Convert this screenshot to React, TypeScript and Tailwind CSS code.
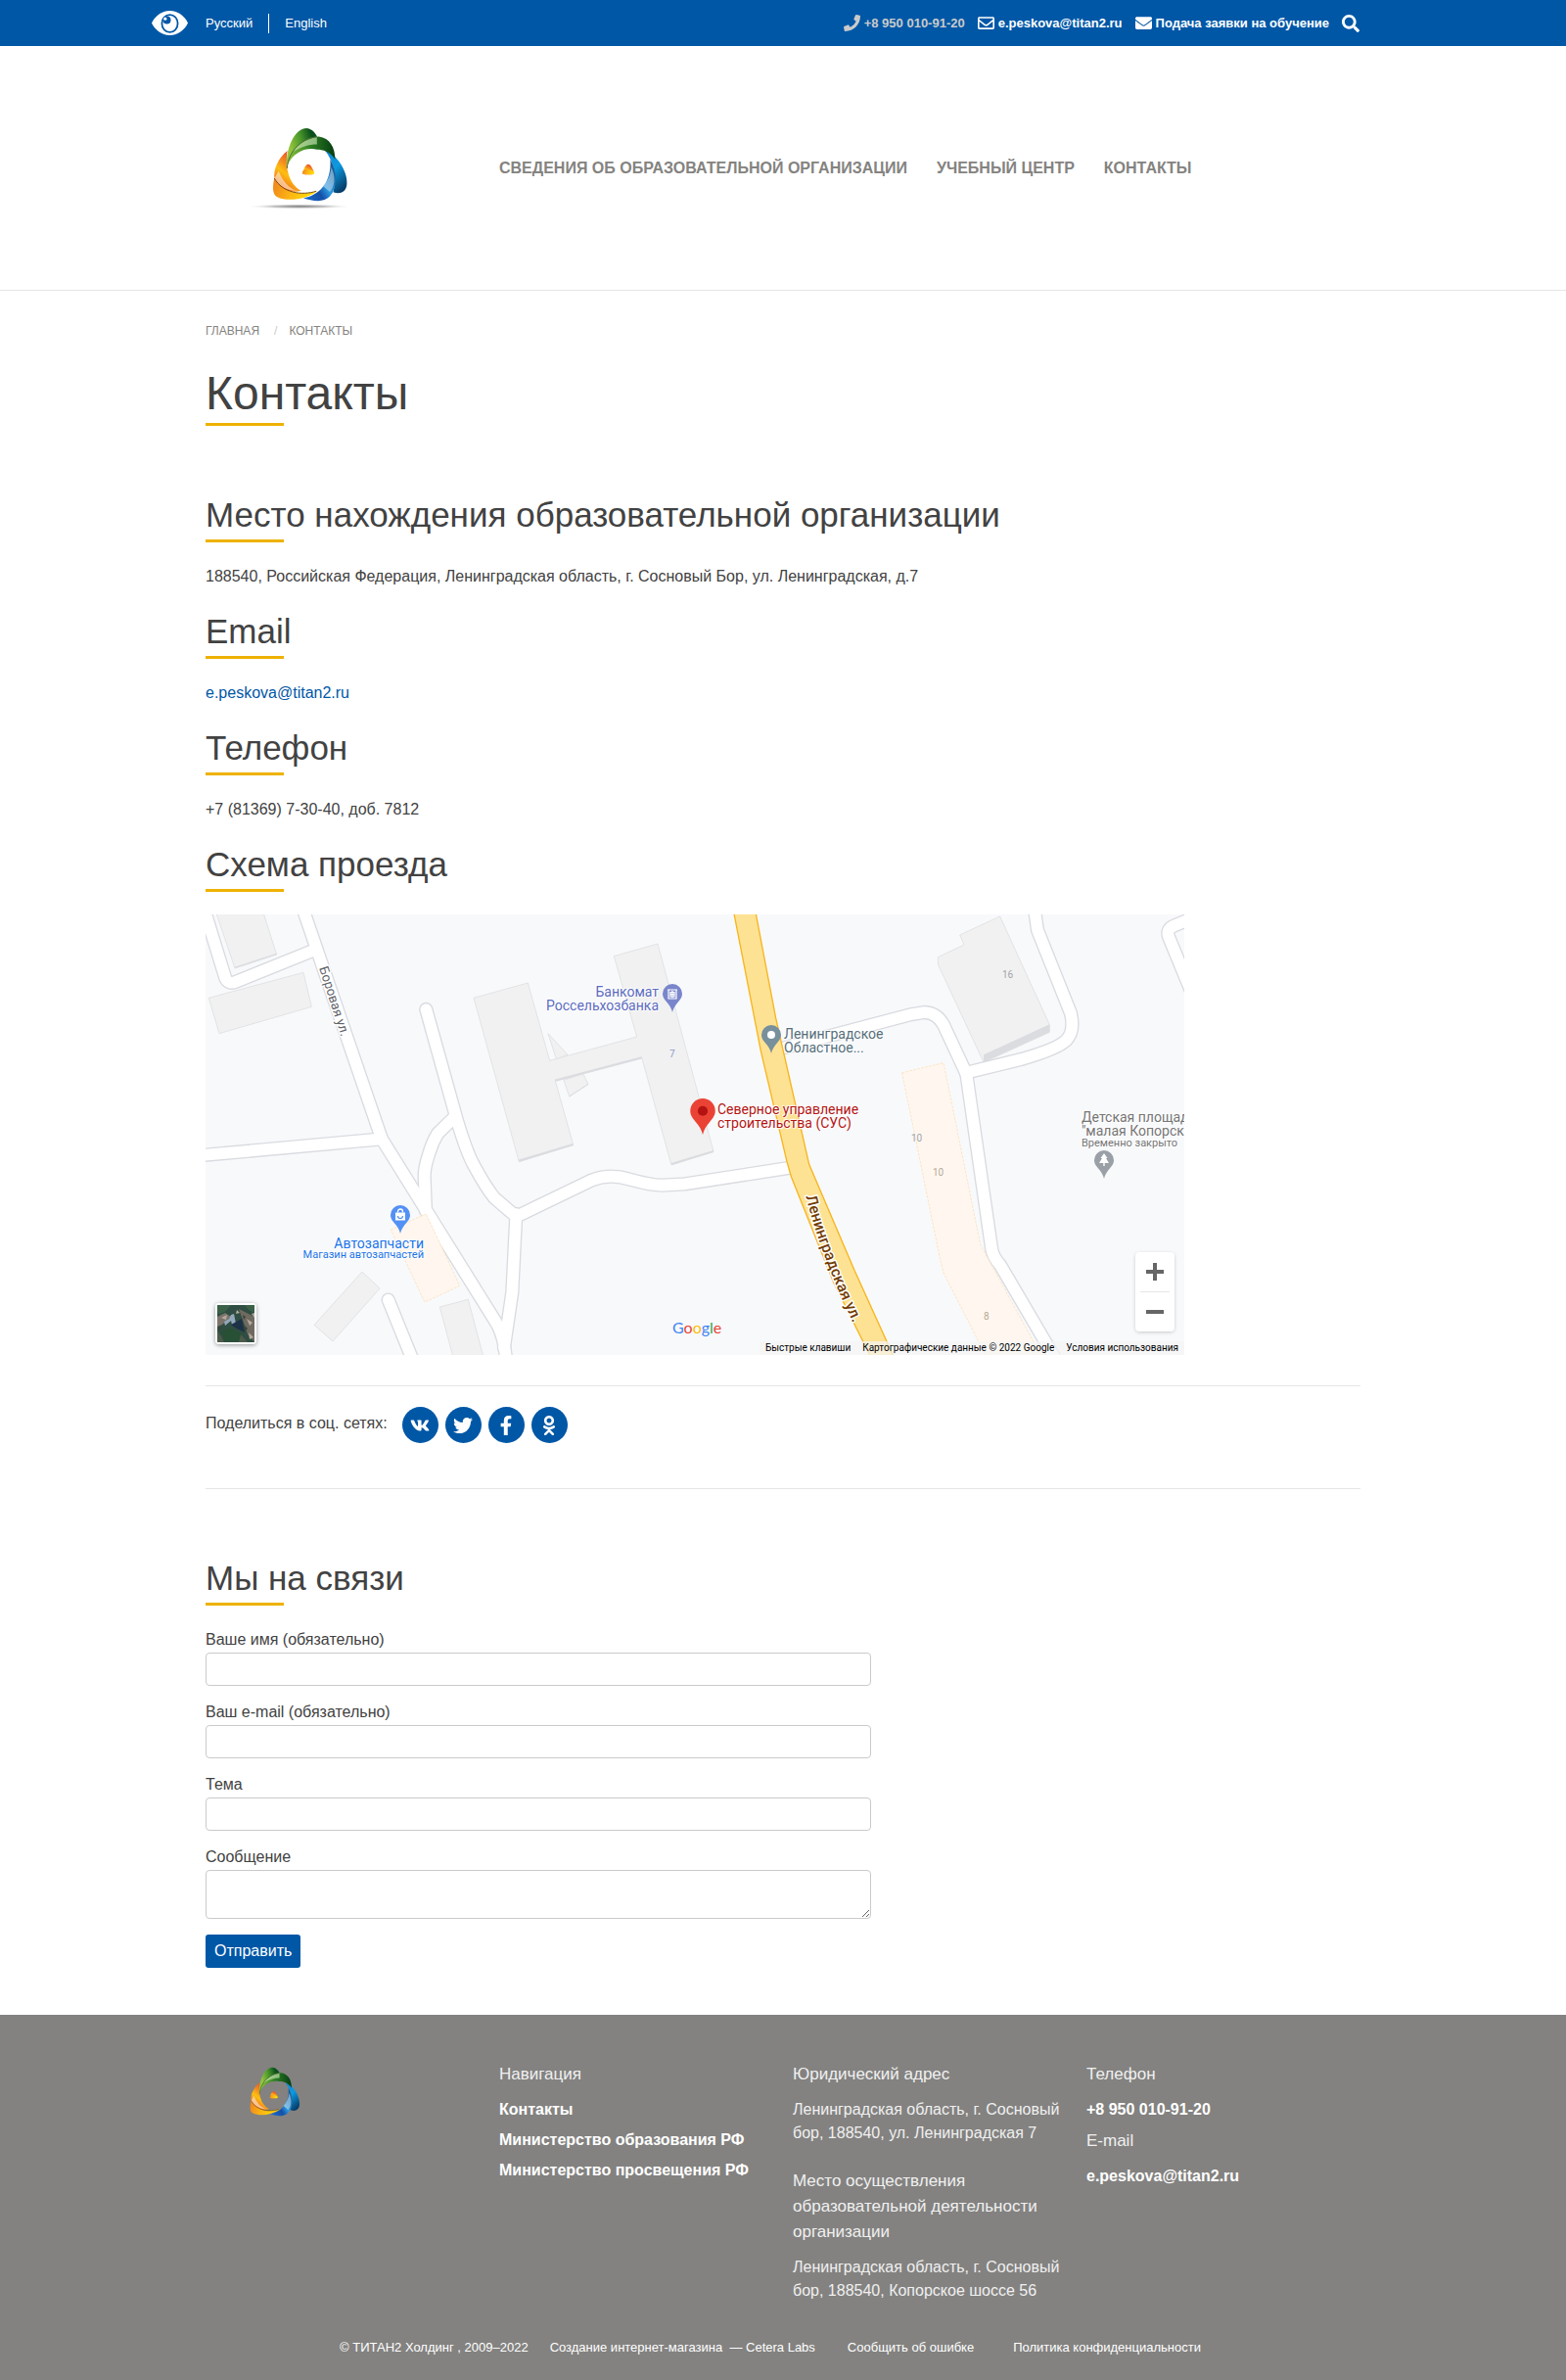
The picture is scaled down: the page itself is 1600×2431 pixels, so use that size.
import type { ReactNode } from "react";
import { FaEnvelope, FaFacebookF, FaOdnoklassniki, FaPhone, FaRegEnvelope, FaSearch, FaTwitter, FaVk } from "react-icons/fa";

const Logo = ({ id, className, shadow }: { id: string; className: string; shadow?: boolean }) => (
  <svg viewBox="0 60 340 252" className={className} role="img" aria-label="ТИТАН2">
    <defs>
      <linearGradient id={`${id}-g1`} x1="0" y1="0.6" x2="1" y2="0.2">
        <stop offset="0.15" stopColor="#93c43c" />
        <stop offset="0.5" stopColor="#4d9a2c" />
        <stop offset="0.85" stopColor="#0a4f1c" />
      </linearGradient>
      <linearGradient id={`${id}-g2`} x1="0" y1="0.5" x2="1" y2="0.5">
        <stop offset="0" stopColor="#8cc63f" />
        <stop offset="0.5" stopColor="#2c7d22" />
        <stop offset="1" stopColor="#053c12" />
      </linearGradient>
      <linearGradient id={`${id}-b1`} x1="0.2" y1="0" x2="0.7" y2="1">
        <stop offset="0" stopColor="#1787d4" />
        <stop offset="0.45" stopColor="#0c9ae0" />
        <stop offset="1" stopColor="#063a66" />
      </linearGradient>
      <linearGradient id={`${id}-b2`} x1="0" y1="1" x2="1" y2="0.2">
        <stop offset="0" stopColor="#1b6fd0" />
        <stop offset="0.4" stopColor="#1350a8" />
        <stop offset="0.6" stopColor="#2d9be0" />
        <stop offset="1" stopColor="#1a4f86" />
      </linearGradient>
      <linearGradient id={`${id}-o1`} x1="0.8" y1="0" x2="0.3" y2="1">
        <stop offset="0" stopColor="#e5352b" />
        <stop offset="0.4" stopColor="#f58a1f" />
        <stop offset="0.6" stopColor="#fdc010" />
        <stop offset="1" stopColor="#ee5a24" />
      </linearGradient>
      <linearGradient id={`${id}-o2`} x1="0" y1="0.3" x2="1" y2="0.5">
        <stop offset="0" stopColor="#f0861c" />
        <stop offset="0.5" stopColor="#fdb913" />
        <stop offset="1" stopColor="#ffe000" />
      </linearGradient>
      <radialGradient id={`${id}-s`}>
        <stop offset="0" stopColor="#777" />
        <stop offset="0.5" stopColor="#aaa" stopOpacity="0.7" />
        <stop offset="1" stopColor="#fff" stopOpacity="0" />
      </radialGradient>
    </defs>
    {shadow && <ellipse cx="168" cy="303" rx="165" ry="8" fill={`url(#${id}-s)`} />}
    <path d="M245 128C292 148 318 205 314 236C311 262 290 266 272 259C284 215 276 168 245 128Z" fill={`url(#${id}-b1)`} />
    <path d="M263 158C284 196 286 246 262 272C244 292 208 287 180 277C226 270 268 232 263 158Z" fill={`url(#${id}-b2)`} />
    <path d="M266 182C280 210 278 240 262 258L240 240C256 224 264 206 266 182Z" fill="#cfe6f5" opacity="0.5" />
    <path d="M131 132C105 152 86 190 92 220C112 254 140 262 174 255C136 234 124 188 131 132Z" fill={`url(#${id}-o1)`} />
    <path d="M91 216C86 240 84 266 100 274C130 288 184 284 224 256C176 270 116 262 91 216Z" fill={`url(#${id}-o2)`} />
    <path d="M92 216L104 194C118 226 136 248 164 256C130 254 104 240 92 216Z" fill="#fff" opacity="0.5" />
    <path d="M91 216C116 262 176 270 220 256" fill="none" stroke="#7a4a10" strokeWidth="3" />
    <path d="M130 186C124 130 152 63 190 63C206 64 216 76 223 89C172 96 136 130 130 186Z" fill={`url(#${id}-g1)`} />
    <path d="M131 178C140 122 184 88 228 88C262 92 278 122 278 158C262 134 240 128 222 128C186 120 148 138 131 178Z" fill={`url(#${id}-g2)`} />
    <path d="M150 134C168 108 196 94 222 90V112C196 112 172 120 150 134Z" fill="#d8eec4" opacity="0.6" />
    <path d="M130 186C136 128 176 94 222 89" fill="none" stroke="#4d6b34" strokeWidth="3" />
    <path d="M195 173C203 173 209 186 213 198C214 205 210 205 195 205C181 205 177 204 178 198C183 185 188 173 195 173Z" fill={`url(#${id}-o1)`} />
    <path d="M178 198C180 191 183 188 195 190C206 191 210 194 213 198C214 205 210 205 195 205C181 205 177 204 178 198Z" fill={`url(#${id}-o2)`} />
  </svg>
);

const SectionTitle = ({ children }: { children: ReactNode }) => (
  <h2 className="text-[35px] leading-[50px] after:block after:h-[3px] after:w-20 after:bg-[#eeb200]">{children}</h2>
);

const TopBar = () => (
  <div className="bg-[#0057a6] text-[13px] leading-5 text-white">
    <div className="mx-auto flex h-[47px] max-w-[1290px] items-center pr-14">
      <button type="button" aria-label="Версия для слабовидящих" className="mr-[18px]">
        <svg viewBox="0 0 37 25" className="block h-[25px] w-[37px]">
          <path d="M0 12.5C3 6 10 0 18.5 0S34 6 37 12.5C34 19 27 25 18.5 25S3 19 0 12.5Z" fill="#fff" />
          <ellipse cx="18.5" cy="13" rx="9" ry="9.8" fill="#0057a6" />
          <ellipse cx="18.5" cy="13" rx="7.2" ry="8" fill="#fff" />
          <circle cx="15.5" cy="9.5" r="4" fill="#0057a6" />
          <circle cx="13.8" cy="8.2" r="1.6" fill="#fff" />
        </svg>
      </button>
      <a href="#ru" className="border-r border-white pr-4">Русский</a>
      <a href="#en" className="pl-4">English</a>
      <div className="ml-auto flex items-center gap-[13px] font-bold">
        <a href="tel:+89500109120" className="flex items-center gap-1 text-[#cacaca]">
          <FaPhone className="size-[17px]" />
          +8 950 010-91-20
        </a>
        <a href="mailto:e.peskova@titan2.ru" className="flex items-center gap-1">
          <FaRegEnvelope className="size-[17px]" />
          e.peskova@titan2.ru
        </a>
        <a href="#request" className="flex items-center gap-1">
          <FaEnvelope className="size-[17px]" />
          Подача заявки на обучение
        </a>
        <button type="button" aria-label="Поиск">
          <FaSearch className="size-[18px]" />
        </button>
      </div>
    </div>
  </div>
);

const Header = () => (
  <header className="border-b border-[#e6e6e6]">
    <div className="mx-auto flex h-[249px] max-w-[1200px] items-center px-[10px]">
      <a href="#home" className="flex w-[300px] pl-10">
        <Logo id="top" className="h-[84px] w-[113px]" shadow />
      </a>
      <nav className="flex gap-[30px] font-bold uppercase text-[#848380]">
        <a href="#info">Сведения об образовательной организации</a>
        <a href="#center">Учебный центр</a>
        <a href="#contacts">Контакты</a>
      </nav>
    </div>
  </header>
);

const Pin = ({ color, className, children }: { color: string; className: string; children: ReactNode }) => (
  <svg viewBox="0 0 20 29" className={className}>
    <path d="M10 0A10 10 0 0 0 0 10C0 14 2.500 16.500 5 19.500C7.500 22.500 9 25 10 29C11 25 12.500 22.500 15 19.500C17.500 16.500 20 14 20 10A10 10 0 0 0 10 0Z" fill={color} />
    {children}
  </svg>
);

const roads = [
  "M24 -10L88 198Q96 230 124 218L362 122",
  "M320 -30L570 700L707 920L918 1258Q938 1290 945 1330L954 1390",
  "M10 751L570 700",
  "M706 303L800 640Q830 740 852 780Q890 850 915 880L982 938",
  "M982 930L970 1170L945 1340",
  "M982 938L1215 826Q1270 805 1330 824Q1400 843 1430 842L1500 838L1830 787",
  "M790 636L742 683Q725 710 715 745Q700 790 701 815L705 920",
  "M590 1193L670 1390",
  "M1780 427L2190 319L2234 312Q2272 314 2292 350L2362 500",
  "M2362 497L2530 456Q2640 425 2668 398Q2695 370 2682 315L2580 60L2570 -10",
  "M2362 500L2440 1040Q2446 1065 2465 1085L2650 1400",
  "M3060 22L3000 46Q2974 56 2982 80L3050 245",
];

const buildings = [
  "M60 0H205L248 135L120 177Z",
  "M40 268L330 190L355 295L72 377Z",
  "M852 268L1018 222L1085 460L1352 387L1282 140L1416 102L1587 738L1458 780L1367 450L1102 522L1157 718L991 770Z",
  "M1080 377L1140 442L1105 455Z",
  "M1128 520L1187 500L1203 532L1145 570Z",
  "M510 1107L564 1158L420 1320L363 1270Z",
  "M748 1215L835 1192L885 1380H792Z",
  "M2275 143L2355 105L2342 75L2465 18L2617 350V373L2415 465L2275 165Z",
];

const halo = "[text-shadow:0_0_2px_#fff,0_0_2px_#fff,1px_1px_1px_#fff,-1px_-1px_1px_#fff]";

const RouteMap = () => (
  <div className="relative h-[450px] max-w-[1000px] overflow-hidden bg-[#f8f9fb] font-['Roboto',sans-serif]">
    <svg viewBox="30 12 3000 1350" preserveAspectRatio="xMinYMin slice" className="block h-[450px] w-full min-w-[1000px]">
      <g fill="#f1f1f1" stroke="#e2e3e5" strokeWidth="3">
        {buildings.map((d) => <path key={d} d={d} />)}
      </g>
      <g stroke="#dadce0" strokeWidth="7" fill="none">
        <path d="M120 175L248 133" strokeWidth="4" />
        <path d="M991 767L1157 717" />
        <path d="M1102 521L1367 451" />
        <path d="M1458 777L1587 738" />
        <path d="M1145 570L1203 532" strokeWidth="3" />
      </g>
      <path d="M2415 442L2617 349V373L2415 465Z" fill="#dadce0" />
      <g fill="none" strokeLinecap="round" strokeLinejoin="round">
        {roads.map((d) => <path key={d} d={d} stroke="#d9dbe0" strokeWidth="43" />)}
        {roads.map((d) => <path key={d} d={d} stroke="#fff" strokeWidth="35" />)}
      </g>
      <path d="M1648 0L1732 430L1812 770L1825 815L1955 1140L2075 1380L2145 1380L2020 1105L1880 778L1778 330L1715 0Z" fill="#fde293" stroke="#f7b51f" strokeWidth="4" />
      <g fill="#fff7ef" stroke="#fde4c4" strokeWidth="3" strokeDasharray="8 4">
        <path d="M598 978L706 930L809 1150L702 1200Z" />
        <path d="M2165 497L2292 467L2405 1025L2600 1380H2430L2292 1110L2280 1060Z" />
      </g>
      <path id="borovaya" d="M378 176L450 400" fill="none" />
      <path id="leningradskaya" d="M1870 876Q1920 1075 2042 1320" fill="none" />
      <g paintOrder="stroke" stroke="#fff" strokeWidth="9" strokeLinejoin="round">
        <text fontSize="40" fill="#5f6368"><textPath href="#borovaya">Боровая ул.</textPath></text>
        <text fontSize="47" fontWeight="500" fill="#733c00"><textPath href="#leningradskaya">Ленинградская ул.</textPath></text>
      </g>
    </svg>

    <p className={`absolute right-[537px] top-[72px] text-right text-sm leading-[14px] text-[#5c6bc0] ${halo}`}>Банкомат<br />Россельхозбанка</p>
    <Pin color="#7986cb" className="absolute left-[467px] top-[71px] h-[29px] w-5">
      <path d="M5 6H15M6 6V15H14V6M8 8.500H12V13H8ZM10 7V14M8 10.700H12" fill="none" stroke="#fff" strokeWidth="1.200" />
    </Pin>
    <p className={`absolute left-[591px] top-[115px] text-sm leading-[14px] text-[#546e7a] ${halo}`}>Ленинградское<br />Областное...</p>
    <Pin color="#78909c" className="absolute left-[568px] top-[113px] h-[29px] w-5">
      <circle cx="10" cy="10" r="4" fill="#fff" />
    </Pin>
    <p className={`absolute left-[523px] top-[192px] text-sm leading-[14px] text-[#b31412] ${halo}`}>Северное управление<br />строительства (СУС)</p>
    <Pin color="#ea4335" className="absolute left-[495px] top-[188px] h-[37px] w-[26px]">
      <circle cx="10" cy="10" r="4" fill="#b31412" />
    </Pin>
    <p className={`absolute left-[895px] top-[200px] whitespace-nowrap text-sm leading-[14px] text-[#757575] ${halo}`}>Детская площад<br />"малая Копорск</p>
    <p className={`absolute left-[895px] top-[228px] whitespace-nowrap text-[11px] leading-3 text-[#757575] ${halo}`}>Временно закрыто</p>
    <Pin color="#9aa0a6" className="absolute left-[908px] top-[241px] h-[29px] w-5">
      <path d="M10 3L6.500 8H8L5 13H9.300V16H10.700V13H15L12 8H13.500Z" fill="#fff" />
    </Pin>
    <p className={`absolute right-[777px] top-[329px] text-right text-sm leading-[14px] text-[#1a73e8] ${halo}`}>Автозапчасти</p>
    <p className={`absolute right-[777px] top-[342px] text-right text-[11px] leading-3 text-[#1a73e8] ${halo}`}>Магазин автозапчастей</p>
    <Pin color="#5491f5" className="absolute left-[189px] top-[297px] h-[29px] w-5">
      <path d="M5 7.500H15V15.500H5Z" fill="#fff" />
      <path d="M7.500 7.500V6.500A2.500 2.500 0 0 1 12.500 6.500V7.500" fill="none" stroke="#fff" strokeWidth="1.300" />
      <path d="M7.500 11A2.500 2.500 0 0 0 12.500 11" fill="none" stroke="#5491f5" strokeWidth="1.200" />
    </Pin>
    <span className="absolute left-[474px] top-[137px] text-[10px] leading-3 text-[#8f98cf]">7</span>
    <span className="absolute left-[814px] top-[56px] text-[10px] leading-3 text-[#a0a5aa]">16</span>
    <span className="absolute left-[721px] top-[223px] text-[10px] leading-3 text-[#a0a5aa]">10</span>
    <span className="absolute left-[743px] top-[258px] text-[10px] leading-3 text-[#b5a898]">10</span>
    <span className="absolute left-[795px] top-[405px] text-[10px] leading-3 text-[#b5a898]">8</span>

    <button type="button" aria-label="Спутник" className="absolute bottom-[11px] left-[10px] size-[42px] rounded-sm border-2 border-white shadow-[0_1px_4px_rgba(0,0,0,0.4)]">
      <svg viewBox="0 0 38 38" className="block size-full bg-[#2f4d42]">
        <path d="M0 0H14L9 6L3 9L0 8Z M28 0H38V8L32 5Z" fill="#3a6148" />
        <path d="M22 4L38 12V38L31 30L27 18Z" fill="#6f6a60" />
        <path d="M0 12L8 8L14 12L5 20L0 22Z" fill="#7c746c" />
        <path d="M4 13L10 10L9 15ZM30 14L36 18L33 21ZM32 28L37 33L33 35ZM35 9L38 8V13ZM20 5L23 8L19 9Z" fill="#b6a99c" />
        <path d="M7 17L12 14L14 10L17 9L19 19L15 20L14 16L8 21Z" fill="#93a8bb" />
        <path d="M14 20L25 14L28 28L18 23Z" fill="#1d3246" />
        <path d="M4 27L13 24L25 29L22 37H8Z" fill="#285034" />
        <path d="M0 26L4 32L7 38H0Z M24 30L31 38H22Z" fill="#4d5a4b" />
        <path d="M26 10L29 12L27 15ZM28 21L31 24L29 26ZM1 22L4 23L2 26Z" fill="#3c4038" />
      </svg>
    </button>
    <div aria-label="Google" className="absolute left-[477px] top-[412px] font-['Lato',sans-serif] text-base leading-5">
      <span className="text-[#4285f4]">G</span>
      <span className="text-[#ea4335]">o</span>
      <span className="text-[#fbbc04]">o</span>
      <span className="text-[#4285f4]">g</span>
      <span className="text-[#34a853]">l</span>
      <span className="text-[#ea4335]">e</span>
    </div>
    <div className="absolute right-[10px] top-[345px] flex h-[81px] w-10 flex-col items-center rounded-sm bg-white shadow-[0_1px_4px_-1px_rgba(0,0,0,0.3)]">
      <button type="button" aria-label="Увеличить" className="flex h-10 items-center">
        <svg viewBox="0 0 18 18" className="size-[18px]"><path d="M7 0H11V7H18V11H11V18H7V11H0V7H7Z" fill="#666" /></svg>
      </button>
      <div className="h-px w-[30px] bg-[#e6e6e6]" />
      <button type="button" aria-label="Уменьшить" className="flex h-10 items-center">
        <svg viewBox="0 0 18 18" className="size-[18px]"><path d="M0 7H18V11H0Z" fill="#666" /></svg>
      </button>
    </div>
    <div className="absolute bottom-0 right-0 flex text-[10px] leading-[14px] text-black">
      <button type="button" className="bg-[#f5f5f5]/70 px-[6px]">Быстрые клавиши</button>
      <span className="bg-[#f5f5f5]/70 px-[6px]">Картографические данные © 2022 Google</span>
      <a href="#terms" className="bg-[#f5f5f5]/70 px-[6px]">Условия использования</a>
    </div>
  </div>
);

const socials = [
  { name: "ВКонтакте", Icon: FaVk },
  { name: "Twitter", Icon: FaTwitter },
  { name: "Facebook", Icon: FaFacebookF },
  { name: "Одноклассники", Icon: FaOdnoklassniki },
];

const Share = () => (
  <div className="mt-[31px] flex h-[106px] items-start border-y border-[#e6e6e6] pt-[21px]">
    <span className="mr-[15px] pt-1 leading-[26px]">Поделиться в соц. сетях:</span>
    <div className="flex gap-[7px]">
      {socials.map(({ name, Icon }) => (
        <a key={name} href="#share" aria-label={name} className="flex size-[37px] items-center justify-center rounded-full bg-[#0057a6] text-white">
          <Icon className="size-5" />
        </a>
      ))}
    </div>
  </div>
);

const fields = [
  { id: "name", label: "Ваше имя (обязательно)", type: "text" },
  { id: "email", label: "Ваш e-mail (обязательно)", type: "email" },
  { id: "subject", label: "Тема", type: "text" },
];

const ContactForm = () => (
  <form className="mt-[22px] max-w-[680px]">
    {fields.map(({ id, label, type }) => (
      <div key={id} className="mb-[14px]">
        <label htmlFor={id} className="block leading-[26px]">{label}</label>
        <input id={id} type={type} className="block h-[34px] w-full rounded border border-[#cacaca] px-2" />
      </div>
    ))}
    <label htmlFor="message" className="block leading-[26px]">Сообщение</label>
    <textarea id="message" className="block h-[50px] w-full rounded border border-[#cacaca] px-2" />
    <button type="button" className="mt-4 h-[34px] rounded-[3px] bg-[#0057a6] px-[9px] text-white">Отправить</button>
  </form>
);

const Footer = () => (
  <footer className="bg-[#838280] pb-[23px] pt-12 text-[#f0f0f0]">
    <div className="mx-auto grid max-w-[1200px] grid-cols-4">
      <div className="pl-9 pt-[5px]">
        <Logo id="bottom" className="h-14 w-[76px]" />
      </div>
      <div className="px-[10px]">
        <h3 className="text-[17px] leading-[26px]">Навигация</h3>
        <ul className="mt-[11px] flex flex-col gap-[7px] whitespace-nowrap font-bold text-white">
          <li><a href="#contacts">Контакты</a></li>
          <li><a href="#minobr">Министерство образования РФ</a></li>
          <li><a href="#minpros">Министерство просвещения РФ</a></li>
        </ul>
      </div>
      <div className="px-[10px]">
        <h3 className="text-[17px] leading-[26px]">Юридический адрес</h3>
        <p className="mt-[11px]">Ленинградская область, г. Сосновый бор, 188540, ул. Ленинградская 7</p>
        <h3 className="mt-6 text-[17px] leading-[26px]">Место осуществления образовательной деятельности организации</h3>
        <p className="mt-[11px]">Ленинградская область, г. Сосновый бор, 188540, Копорское шоссе 56</p>
      </div>
      <div className="px-[10px]">
        <h3 className="text-[17px] leading-[26px]">Телефон</h3>
        <a href="tel:+89500109120" className="mt-[11px] block font-bold text-white">+8 950 010-91-20</a>
        <h3 className="mt-[7px] text-[17px] leading-[26px]">E-mail</h3>
        <a href="mailto:e.peskova@titan2.ru" className="mt-[11px] block font-bold text-white">e.peskova@titan2.ru</a>
      </div>
    </div>
    <div className="mx-auto mt-9 flex max-w-[1200px] pl-[147px] text-[13px] leading-5 text-white">
      <span className="mr-[22px]">© ТИТАН2 Холдинг , 2009–2022</span>
      <span className="mr-[33px]"><a href="#dev">Создание интернет-магазина</a>&nbsp; — Cetera Labs</span>
      <a href="#error" className="mr-10">Сообщить об ошибке</a>
      <a href="#privacy">Политика конфиденциальности</a>
    </div>
  </footer>
);

export default function App() {
  return (
    <div className="bg-white font-['Liberation_Sans',Arial,sans-serif] text-base leading-6 text-[#424242]">
      <TopBar />
      <Header />
      <main className="mx-auto max-w-[1200px] px-[10px] pb-12 pt-[31px]">
        <nav aria-label="Навигация по разделам" className="flex text-[12px] leading-5 uppercase text-[#848380]">
          <a href="#home">Главная</a>
          <span className="ml-[15px] mr-3 text-[#cacaca]">/</span>
          <span>Контакты</span>
        </nav>
        <h1 className="mb-[66px] mt-6 text-5xl leading-[60px] after:block after:h-[3px] after:w-20 after:bg-[#eeb200]">Контакты</h1>
        <SectionTitle>Место нахождения образовательной организации</SectionTitle>
        <p className="mb-[18px] mt-[22px] leading-[26px]">188540, Российская Федерация, Ленинградская область, г. Сосновый Бор, ул. Ленинградская, д.7</p>
        <SectionTitle>Email</SectionTitle>
        <p className="mb-[18px] mt-[22px] leading-[26px]">
          <a href="mailto:e.peskova@titan2.ru" className="text-[#0057a6]">e.peskova@titan2.ru</a>
        </p>
        <SectionTitle>Телефон</SectionTitle>
        <p className="mb-[18px] mt-[22px] leading-[26px]">+7 (81369) 7-30-40, доб. 7812</p>
        <SectionTitle>Схема проезда</SectionTitle>
        <div className="mt-[23px]">
          <RouteMap />
        </div>
        <Share />
        <div className="mt-[66px]">
          <SectionTitle>Мы на связи</SectionTitle>
        </div>
        <ContactForm />
      </main>
      <Footer />
    </div>
  );
}
